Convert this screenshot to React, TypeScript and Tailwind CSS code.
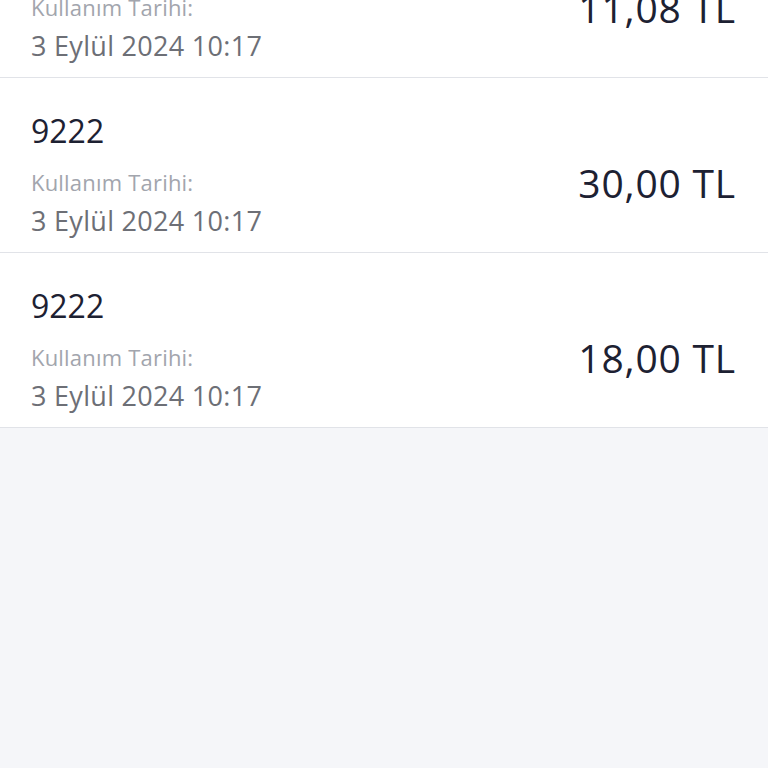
const rows = [
  { code: "9222", date: "3 Eylül 2024 10:17", amount: "11,08 TL" },
  { code: "9222", date: "3 Eylül 2024 10:17", amount: "30,00 TL" },
  { code: "9222", date: "3 Eylül 2024 10:17", amount: "18,00 TL" },
];

const UsageRow = ({ code, date, amount }: { code: string; date: string; amount: string }) => (
  <div className="flex items-start justify-between h-[175px] pl-[31px] pr-[32px] pt-[33px] bg-white border-b border-[#e1e3e8]">
    <div className="flex flex-col">
      <div className="text-[32px] leading-[40px] text-[#1d2132]">{code}</div>
      <div className="mt-[16px] text-[22px] leading-[30px] tracking-[0.2px] text-[#a2a5ad]">Kullanım Tarihi:</div>
      <div className="mt-[5px] text-[27px] leading-[38px] tracking-[0.3px] text-[#6d6f76]">{date}</div>
    </div>
    <div className="mt-[48px] text-[39px] leading-[48px] tracking-[0.8px] text-[#1d2132]">{amount}</div>
  </div>
);

export default function App() {
  return (
    <div className="h-[768px] overflow-hidden bg-[#f5f6f9]" style={{ fontFamily: '"Open Sans", sans-serif' }}>
      <div className="-mt-[97px]">
        {rows.map((r, i) => (
          <UsageRow key={i} {...r} />
        ))}
      </div>
    </div>
  );
}
